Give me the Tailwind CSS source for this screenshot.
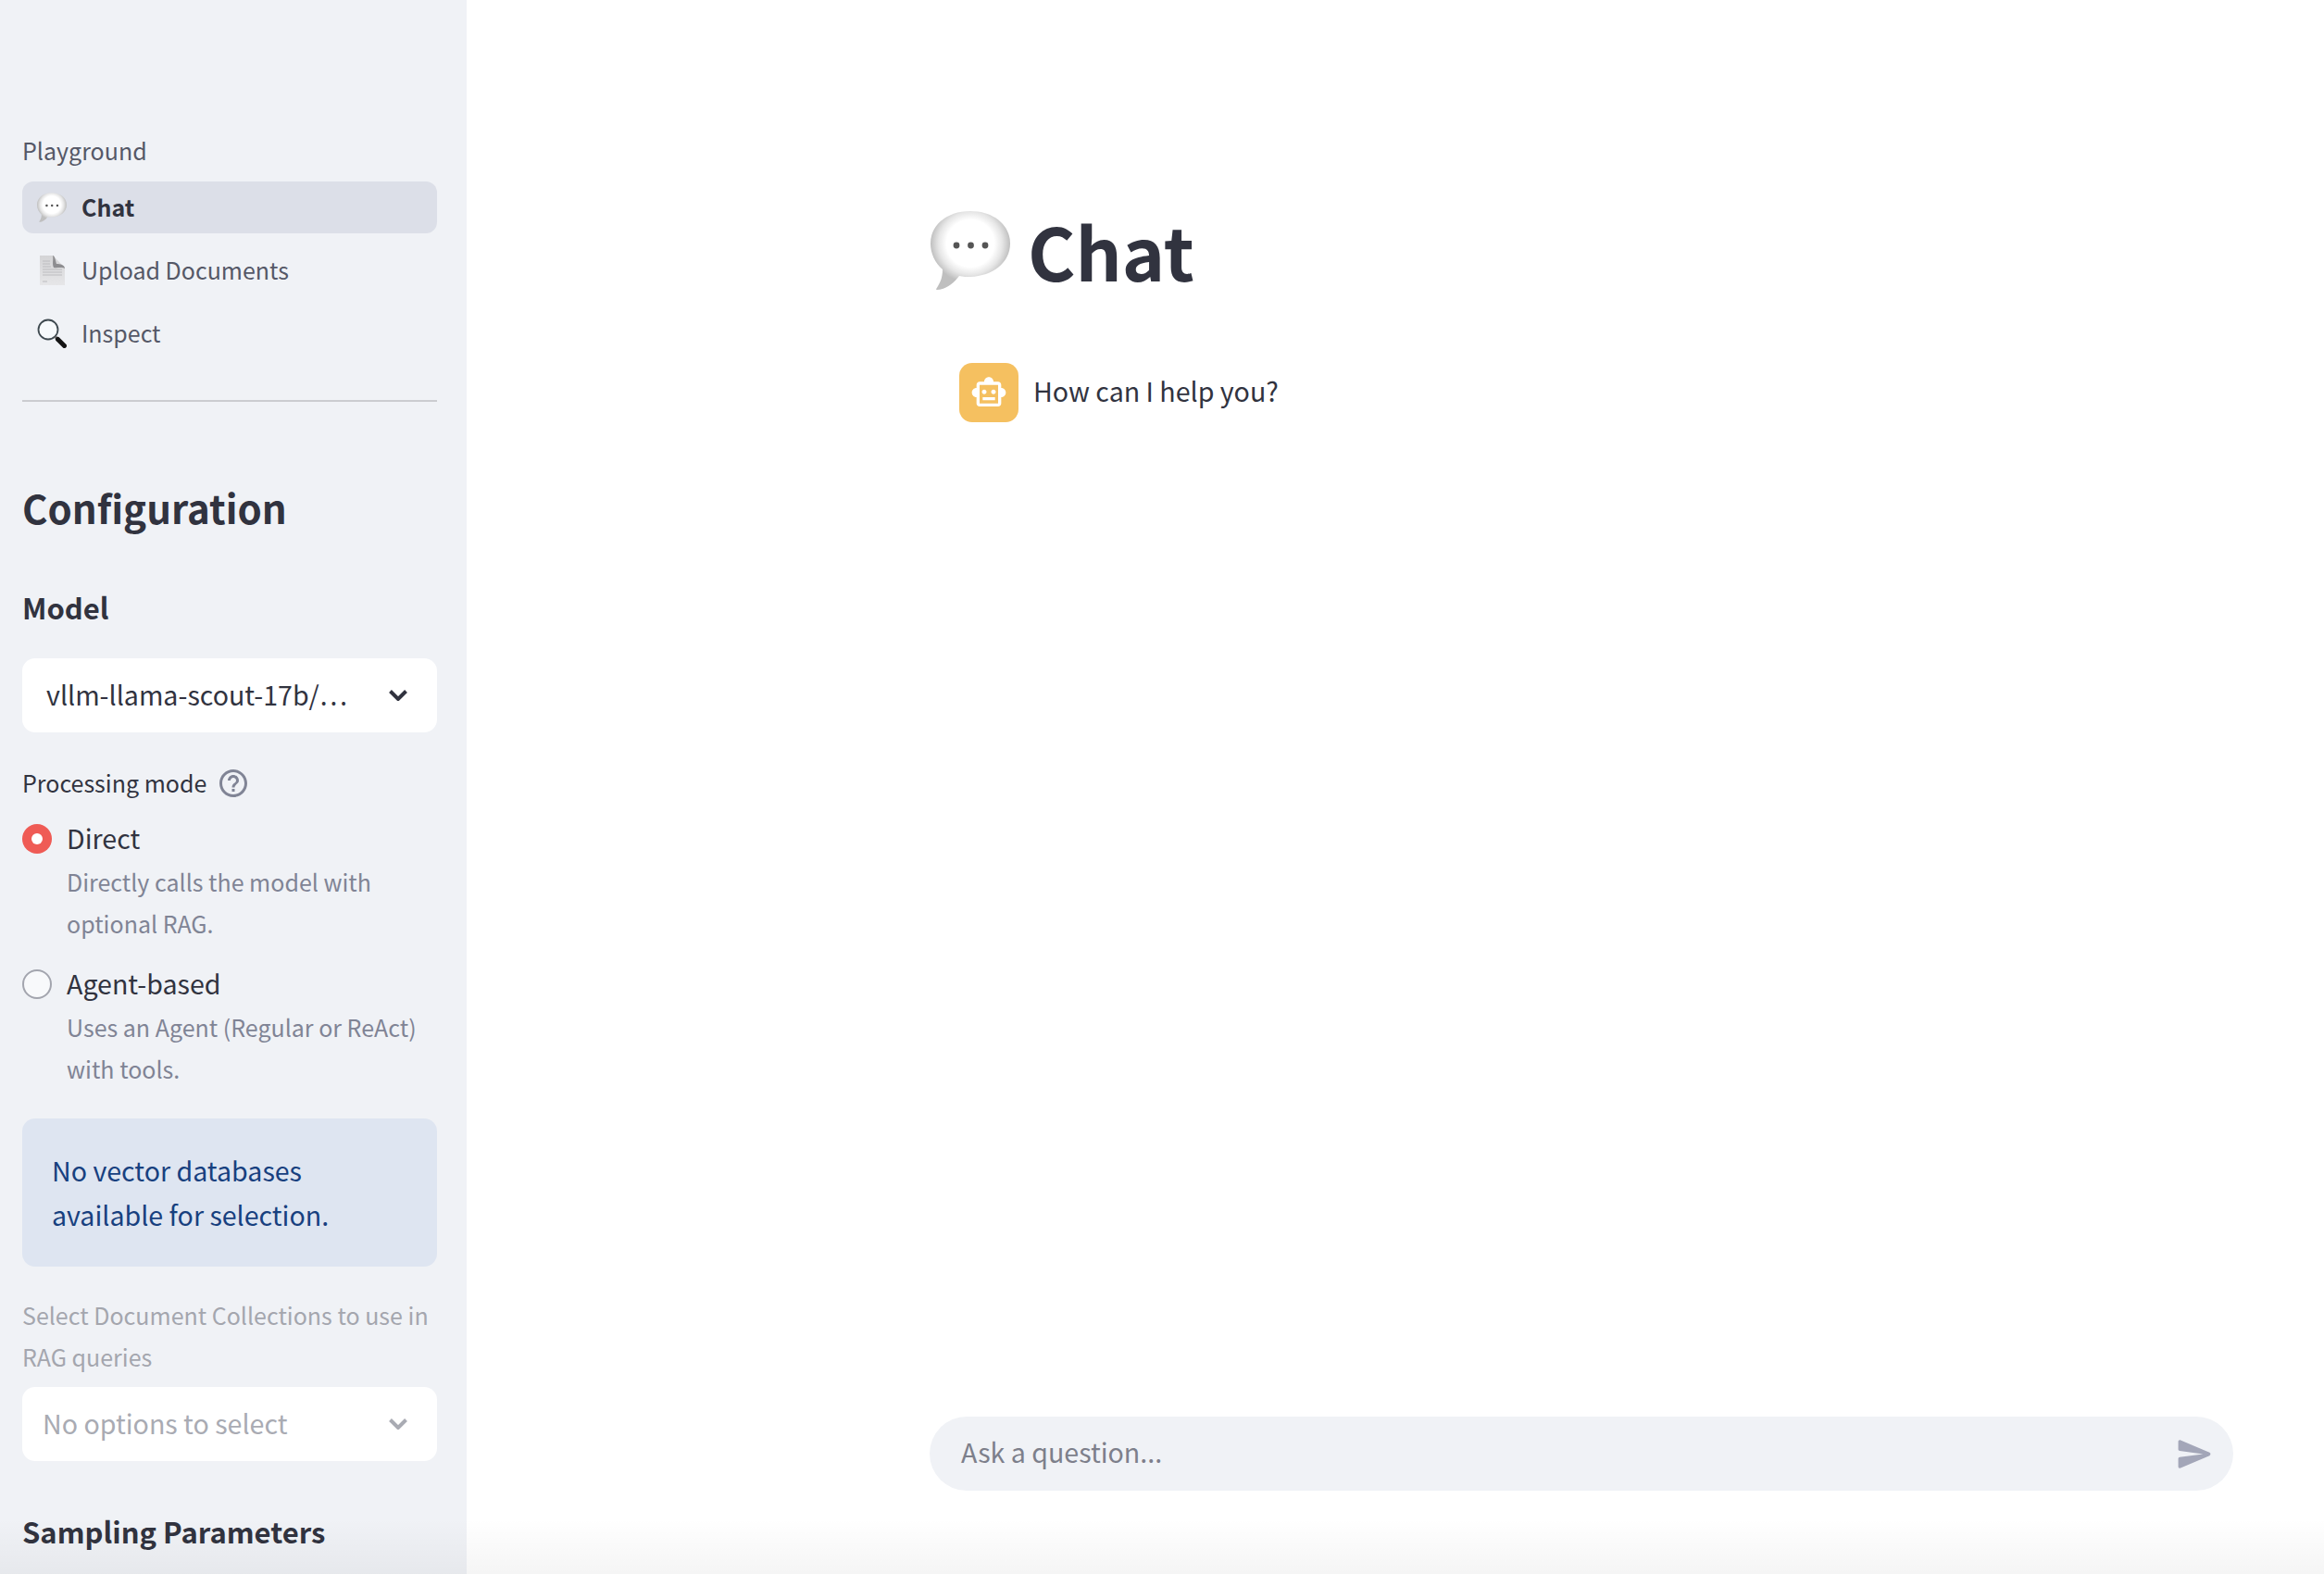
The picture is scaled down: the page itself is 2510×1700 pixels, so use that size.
<!DOCTYPE html>
<html lang="en">
<head>
    <meta charset="UTF-8">
    <title>Chat</title>
    <script src="https://cdn.jsdelivr.net/npm/@tailwindcss/browser@4"></script>
</head>
<body class="font-['Noto_Sans_CJK_SC','Noto_Sans',sans-serif] text-[#31333f] bg-white">
    <svg class="absolute h-0 w-0">
        <defs>
            <radialGradient id="bubbleFill" cx="50%" cy="41%" r="50%">
                <stop offset="0%" stop-color="#ffffff"/>
                <stop offset="60%" stop-color="#ffffff"/>
                <stop offset="80%" stop-color="#e6e6e6"/>
                <stop offset="100%" stop-color="#bfbfbf"/>
            </radialGradient>
            <linearGradient id="pageFill" x1="0" y1="0" x2="0" y2="1">
                <stop offset="0%" stop-color="#d4d4d6"/>
                <stop offset="100%" stop-color="#e6e6e8"/>
            </linearGradient>
            <symbol id="bubble" viewBox="0 0 86 85">
                <path fill="url(#bubbleFill)" d="M43 0C67 0 86 14 86 35C86 56 67 70 43 71C39 71 35 71 31 70C25 78 16 85 7 85C5 85 7 83 8 81C11 76 13 71 13 63C5 56 0 46 0 35C0 14 19 0 43 0Z"/>
                <circle cx="28" cy="37" r="3.4" fill="#555"/>
                <circle cx="43.500" cy="37" r="3.4" fill="#555"/>
                <circle cx="59" cy="37" r="3.4" fill="#555"/>
            </symbol>
        </defs>
    </svg>

    <div class="flex h-[1700px] w-[2510px] overflow-hidden">
        <!-- sidebar -->
        <aside class="relative w-[504px] shrink-0 overflow-hidden bg-[#f0f2f6] pl-[24px] pr-[32px] pt-[142px]">
            <p class="h-[40px] text-[25px] leading-[40px] text-[#555867]">Playground</p>
            <nav class="mt-[14px] flex flex-col gap-[12px]">
                <a class="flex h-[56px] items-center rounded-[12px] bg-[#dcdfe8] pl-[16px] text-[25px] font-semibold text-[#31333f]">
                    <svg class="h-[32px] w-[32px]"><use href="#bubble"/></svg>
                    <span class="ml-[16px]">Chat</span>
                </a>
                <a class="flex h-[56px] items-center rounded-[12px] pl-[16px] text-[25px] text-[#555867]">
                    <svg class="h-[32px] w-[32px]" viewBox="0 0 32 32">
                        <path fill="url(#pageFill)" d="M3 0H17L30 13V32H3Z"/>
                        <path fill="#8d8d90" d="M17 0C19 0 20 5 21 9C25 9 30 10 30 14C27 12 21 14 18 13C16 9 18 4 17 0Z"/>
                        <path stroke="#bcbcbf" stroke-width="1" d="M6 6H14M6 9H14M6 12H15M6 15H27M6 18H27M6 21H27M6 28H11"/>
                    </svg>
                    <span class="ml-[16px]">Upload Documents</span>
                </a>
                <a class="flex h-[56px] items-center rounded-[12px] pl-[16px] text-[25px] text-[#555867]">
                    <svg class="h-[32px] w-[32px]" viewBox="0 0 32 32">
                        <circle cx="12" cy="12" r="10.500" fill="#f7fafc" stroke="#3f4a50" stroke-width="1.800"/>
                        <path d="M19.500 19.500L22 22" stroke="#6a6a6a" stroke-width="3"/>
                        <path d="M22.500 22.500L29.500 29.500" stroke="#141414" stroke-width="5" stroke-linecap="round"/>
                    </svg>
                    <span class="ml-[16px]">Inspect</span>
                </a>
            </nav>
            <hr class="mt-[44px] h-[2px] border-0 bg-[#cbccd0]">

            <h2 class="mt-[84px] h-[60px] text-[42px] font-semibold leading-[60px]">Configuration</h2>
            <h3 class="mt-[58px] h-[40px] text-[31px] font-semibold leading-[40px]">Model</h3>
            <div class="mt-[35px] flex h-[80px] items-center justify-between rounded-[14px] bg-white pl-[26px] pr-[32px] text-[28.6px]">
                <span class="-translate-y-[1px]">vllm-llama-scout-17b/…</span>
                <svg class="h-[12px] w-[20px]" viewBox="0 0 20 12" fill="none" stroke="#31333f" stroke-width="4"><path d="M1.500 1.500L10 10L18.500 1.500"/></svg>
            </div>

            <div class="mt-[35px] flex h-[40px] items-center text-[25px]">
                <span>Processing mode</span>
                <svg class="ml-[11px] h-[36px] w-[36px]" viewBox="0 0 24 24" fill="#808495"><path d="M11 18h2v-2h-2v2zm1-16C6.480 2 2 6.480 2 12s4.480 10 10 10 10-4.480 10-10S17.520 2 12 2zm0 18c-4.410 0-8-3.590-8-8s3.590-8 8-8 8 3.590 8 8-3.590 8-8 8zm0-14c-2.210 0-4 1.790-4 4h2c0-1.100.9-2 2-2s2 .9 2 2c0 2-3 1.750-3 5h2c0-2.250 3-2.500 3-5 0-2.210-1.790-4-4-4z"/></svg>
            </div>

            <div class="mt-[20px] flex h-[40px] items-center text-[28.6px]">
                <span class="flex h-[32px] w-[32px] items-center justify-center rounded-full bg-[#ef5b55]"><span class="h-[12px] w-[12px] rounded-full bg-white"></span></span>
                <span class="ml-[16px] -translate-y-[1px]">Direct</span>
            </div>
            <p class="mt-[4px] pl-[48px] text-[25px] leading-[45px] text-[#808495]">Directly calls the model with optional RAG.</p>

            <div class="mt-[23px] flex h-[40px] items-center text-[28.6px]">
                <span class="h-[32px] w-[32px] rounded-full border-2 border-[#a3a5ae] bg-[#f8f9fb]"></span>
                <span class="ml-[16px] -translate-y-[1px]">Agent-based</span>
            </div>
            <p class="mt-[4px] pl-[48px] text-[25px] leading-[45px] text-[#808495]">Uses an Agent (Regular or ReAct) with tools.</p>

            <div class="mt-[31px] h-[160px] rounded-[14px] bg-[#dee5f1] px-[32px] py-[32px] text-[28.6px] leading-[48px] text-[#17407f]">No vector databases available for selection.</div>

            <p class="mt-[30px] text-[25px] leading-[45px] text-[#a4a6ae]">Select Document Collections to use in RAG queries</p>
            <div class="mt-[10px] flex h-[80px] items-center justify-between rounded-[14px] bg-white pl-[22px] pr-[32px] text-[28.6px] text-[#a9abb3]">
                <span class="-translate-y-[1px]">No options to select</span>
                <svg class="h-[12px] w-[20px]" viewBox="0 0 20 12" fill="none" stroke="#a9abb3" stroke-width="4"><path d="M1.500 1.500L10 10L18.500 1.500"/></svg>
            </div>

            <h3 class="mt-[52px] h-[48px] text-[31px] font-semibold leading-[48px]">Sampling Parameters</h3>
            <div class="pointer-events-none absolute inset-x-0 bottom-0 h-[60px] bg-linear-to-t from-black/[.04] to-transparent"></div>
        </aside>

        <!-- main -->
        <main class="relative flex flex-1 flex-col justify-between pb-[90px] pl-[500px] pr-[98px] pt-[224px]">
            <div>
                <h1 class="flex h-[92px] items-center text-[78.6px] font-bold leading-[92px]">
                    <svg class="h-[85px] w-[86px] translate-x-[1px]"><use href="#bubble"/></svg>
                    <span class="ml-[20px]">Chat</span>
                </h1>
                <div class="ml-[32px] mt-[76px] flex items-center">
                    <span class="flex h-[64px] w-[64px] items-center justify-center rounded-[14px] bg-[#f5c060]">
                        <svg class="h-[40px] w-[40px]" viewBox="0 0 24 24" fill="#fff"><path d="M20 9V7c0-1.100-.9-2-2-2h-3c0-1.660-1.340-3-3-3S9 3.340 9 5H6c-1.100 0-2 .9-2 2v2c-1.660 0-3 1.340-3 3s1.340 3 3 3v4c0 1.100.9 2 2 2h12c1.100 0 2-.9 2-2v-4c1.660 0 3-1.340 3-3s-1.340-3-3-3zm-2 10H6V7h12v12zm-9-6c-.83 0-1.500-.67-1.500-1.500S8.170 10 9 10s1.500.67 1.500 1.500S9.830 13 9 13zm7.500-1.500c0 .83-.67 1.500-1.500 1.500s-1.500-.67-1.500-1.500.67-1.500 1.500-1.500 1.500.67 1.500 1.500zM8 15h8v2H8v-2z"/></svg>
                    </span>
                    <span class="ml-[16px] -translate-y-[2px] text-[28.6px]">How can I help you?</span>
                </div>
            </div>
            <div class="flex h-[80px] items-center justify-between rounded-full bg-[#f0f2f6] pl-[34px] pr-[20px] text-[28.6px] text-[#7d7f8b]">
                <span class="-translate-y-[2px]">Ask a question...</span>
                <svg class="h-[43px] w-[43px]" viewBox="0 0 24 24" fill="#a3a6b8"><path d="M3.400 20.400l17.450-7.480c.81-.35.81-1.490 0-1.840L3.400 3.600c-.66-.29-1.390.2-1.390.91L2 9.120c0 .5.37.93.87.99L17 12 2.870 13.880c-.5.07-.87.5-.87 1l.01 4.610c0 .71.73 1.200 1.390.91z"/></svg>
            </div>
            <div class="pointer-events-none absolute inset-x-0 bottom-0 h-[60px] bg-linear-to-t from-black/[.04] to-transparent"></div>
        </main>
    </div>
</body>
</html>
